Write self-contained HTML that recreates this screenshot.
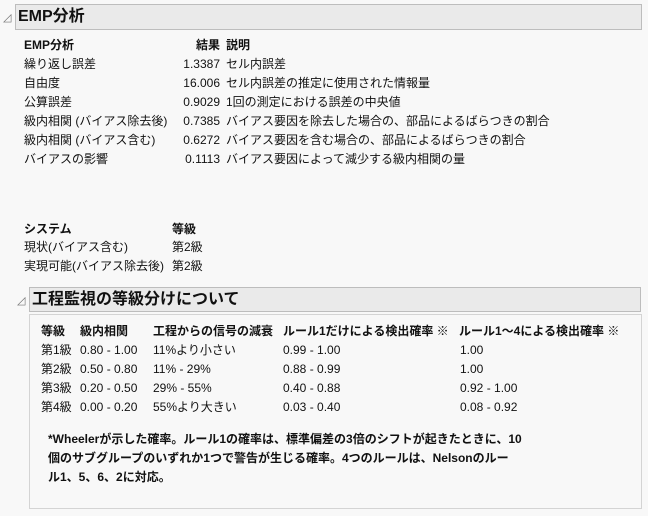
<!DOCTYPE html>
<html><head><meta charset="utf-8"><style>
body{margin:0;width:648px;height:516px;background:#f8f8f8;font-family:"Liberation Sans","Noto Sans CJK JP",sans-serif;font-size:12px;color:#111;position:relative;overflow:hidden}
.a{position:absolute;white-space:nowrap;line-height:14px}
.b{font-weight:bold}
.hd{position:absolute;background:#eaeaea;border:1px solid #bdbdbd;box-sizing:border-box;font-weight:bold;font-size:16px;line-height:24px;padding-left:2px}
.tri{position:absolute;font-size:11px;color:#777}
.r{text-align:right}
</style></head><body>
<div class="tri" style="left:3px;top:11px">◿</div>
<div class="hd" style="left:15px;top:4px;width:627px;height:26px">EMP分析</div>

<div class="a b" style="left:24px;top:38px">EMP分析</div>
<div class="a b r" style="left:160px;top:38px;width:60px">結果</div>
<div class="a b" style="left:226px;top:38px">説明</div>

<div class="a" style="left:24px;top:57px">繰り返し誤差</div>
<div class="a r" style="left:160px;top:57px;width:60px">1.3387</div>
<div class="a" style="left:226px;top:57px">セル内誤差</div>
<div class="a" style="left:24px;top:76px">自由度</div>
<div class="a r" style="left:160px;top:76px;width:60px">16.006</div>
<div class="a" style="left:226px;top:76px">セル内誤差の推定に使用された情報量</div>
<div class="a" style="left:24px;top:95px">公算誤差</div>
<div class="a r" style="left:160px;top:95px;width:60px">0.9029</div>
<div class="a" style="left:226px;top:95px">1回の測定における誤差の中央値</div>
<div class="a" style="left:24px;top:114px">級内相関 (バイアス除去後)</div>
<div class="a r" style="left:160px;top:114px;width:60px">0.7385</div>
<div class="a" style="left:226px;top:114px">バイアス要因を除去した場合の、部品によるばらつきの割合</div>
<div class="a" style="left:24px;top:133px">級内相関 (バイアス含む)</div>
<div class="a r" style="left:160px;top:133px;width:60px">0.6272</div>
<div class="a" style="left:226px;top:133px">バイアス要因を含む場合の、部品によるばらつきの割合</div>
<div class="a" style="left:24px;top:152px">バイアスの影響</div>
<div class="a r" style="left:160px;top:152px;width:60px">0.1113</div>
<div class="a" style="left:226px;top:152px">バイアス要因によって減少する級内相関の量</div>

<div class="a b" style="left:24px;top:222px">システム</div>
<div class="a b" style="left:172px;top:222px">等級</div>
<div class="a" style="left:24px;top:240px">現状(バイアス含む)</div>
<div class="a" style="left:172px;top:240px">第2級</div>
<div class="a" style="left:24px;top:259px">実現可能(バイアス除去後)</div>
<div class="a" style="left:172px;top:259px">第2級</div>

<div class="tri" style="left:17px;top:294px">◿</div>
<div class="hd" style="left:29px;top:287px;width:612px;height:25px;line-height:23px">工程監視の等級分けについて</div>
<div style="position:absolute;left:29px;top:314px;width:613px;height:195px;border:1px solid #d4d4d4;box-sizing:border-box"></div>

<div class="a b" style="left:41px;top:324px">等級</div>
<div class="a b" style="left:80px;top:324px">級内相関</div>
<div class="a b" style="left:153px;top:324px">工程からの信号の減衰</div>
<div class="a b" style="left:283px;top:324px">ルール1だけによる検出確率 ※</div>
<div class="a b" style="left:459px;top:324px">ルール1～4による検出確率 ※</div>

<div class="a" style="left:41px;top:343px">第1級</div><div class="a" style="left:80px;top:343px">0.80 - 1.00</div><div class="a" style="left:153px;top:343px">11%より小さい</div><div class="a" style="left:283px;top:343px">0.99 - 1.00</div><div class="a" style="left:460px;top:343px">1.00</div>
<div class="a" style="left:41px;top:362px">第2級</div><div class="a" style="left:80px;top:362px">0.50 - 0.80</div><div class="a" style="left:153px;top:362px">11% - 29%</div><div class="a" style="left:283px;top:362px">0.88 - 0.99</div><div class="a" style="left:460px;top:362px">1.00</div>
<div class="a" style="left:41px;top:381px">第3級</div><div class="a" style="left:80px;top:381px">0.20 - 0.50</div><div class="a" style="left:153px;top:381px">29% - 55%</div><div class="a" style="left:283px;top:381px">0.40 - 0.88</div><div class="a" style="left:460px;top:381px">0.92 - 1.00</div>
<div class="a" style="left:41px;top:400px">第4級</div><div class="a" style="left:80px;top:400px">0.00 - 0.20</div><div class="a" style="left:153px;top:400px">55%より大きい</div><div class="a" style="left:283px;top:400px">0.03 - 0.40</div><div class="a" style="left:460px;top:400px">0.08 - 0.92</div>

<div class="a b" style="left:48px;top:432px">*Wheelerが示した確率。ルール1の確率は、標準偏差の3倍のシフトが起きたときに、10</div>
<div class="a b" style="left:48px;top:451px">個のサブグループのいずれか1つで警告が生じる確率。4つのルールは、Nelsonのルー</div>
<div class="a b" style="left:48px;top:470px">ル1、5、6、2に対応。</div>
</body></html>
